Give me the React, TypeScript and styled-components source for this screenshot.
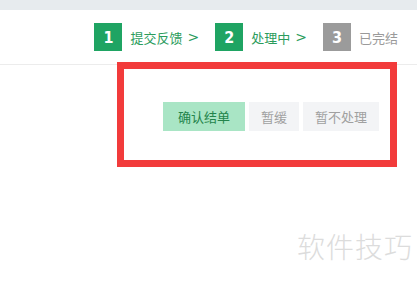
import { FC } from 'react'
import styled, { createGlobalStyle } from 'styled-components'

const GlobalStyle = createGlobalStyle`
  html, body {
    margin: 0;
    padding: 0;
    background: #fff;
    font-family: "Microsoft YaHei", "Noto Sans CJK SC", "Liberation Sans", sans-serif;
  }
`

type StepState = 'done' | 'todo'

const steps: { num: number; label: string; state: StepState; arrow: boolean }[] = [
  { num: 1, label: '提交反馈', state: 'done', arrow: true },
  { num: 2, label: '处理中', state: 'done', arrow: true },
  { num: 3, label: '已完结', state: 'todo', arrow: false },
]

const App: FC = () => {
  return (
    <Page>
      <GlobalStyle />
      <TopBar />
      <StepBar>
        {steps.map((s) => (
          <Step key={s.num}>
            <StepNum state={s.state}>{s.num}</StepNum>
            <StepLabel state={s.state}>
              {s.label}
              {s.arrow && <Chevron>&gt;</Chevron>}
            </StepLabel>
          </Step>
        ))}
      </StepBar>
      <ActionRow>
        <ActionButton variant="primary" w={82}>确认结单</ActionButton>
        <ActionButton variant="plain" w={50}>暂缓</ActionButton>
        <ActionButton variant="plain" w={76}>暂不处理</ActionButton>
      </ActionRow>
      <Highlight />
      <Watermark>软件技巧</Watermark>
    </Page>
  )
}

const Page = styled.div`
  position: relative;
  width: 417px;
  height: 282px;
  overflow: hidden;
  background: #fff;
`

const TopBar = styled.div`
  height: 10px;
  background: #e7ebee;
`

const StepBar = styled.div`
  height: 55px;
  box-sizing: border-box;
  display: flex;
  justify-content: flex-end;
  align-items: center;
  padding: 0 19px 0 0;
  gap: 16px;
  border-bottom: 1px solid #ececec;
`

const Step = styled.div`
  display: flex;
  align-items: center;
  gap: 8px;
`

const StepNum = styled.span<{ state: StepState }>`
  width: 28px;
  height: 28px;
  display: grid;
  place-content: center;
  background: ${(p) => (p.state === 'done' ? '#1fa463' : '#9b9b9b')};
  color: #fff;
  font-family: "DejaVu Sans Condensed", "DejaVu Sans", sans-serif;
  font-weight: 700;
  font-size: 16px;
`

const StepLabel = styled.span<{ state: StepState }>`
  font-size: 13px;
  color: ${(p) => (p.state === 'done' ? '#2b9c5c' : '#9a9a9a')};
  display: flex;
  align-items: center;
  gap: 5px;
`

const Chevron = styled.span`
  font-family: "DejaVu Sans", sans-serif;
  font-size: 14px;
  line-height: 1;
`

const ActionRow = styled.div`
  display: flex;
  justify-content: flex-end;
  gap: 4px;
  padding: 37px 38px 0 0;
`

const ActionButton = styled.button<{ variant: 'primary' | 'plain'; w: number }>`
  width: ${(p) => p.w}px;
  height: 29px;
  padding: 0;
  border: none;
  font-family: inherit;
  font-size: 13px;
  background: ${(p) => (p.variant === 'primary' ? '#a9e5c5' : '#f3f4f6')};
  color: ${(p) => (p.variant === 'primary' ? '#23844b' : '#a0a0a0')};
`

// annotation frame drawn over the button area
const Highlight = styled.div`
  position: absolute;
  left: 117px;
  top: 62px;
  width: 280px;
  height: 105px;
  box-sizing: border-box;
  border: 7px solid #f23b3b;
  pointer-events: none;
`

const Watermark = styled.div`
  position: absolute;
  left: 297px;
  top: 226px;
  font-size: 28px;
  color: #dcdcdc;
  letter-spacing: 1px;
  font-family: "Noto Sans CJK SC", sans-serif;
  font-weight: 300;
`

export default App
